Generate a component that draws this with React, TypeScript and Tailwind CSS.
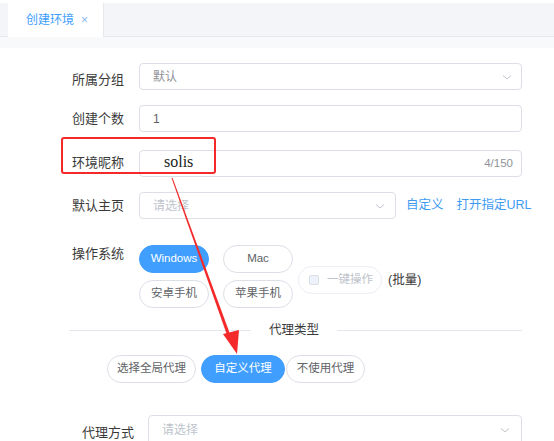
import React from 'react';

const font = { fontFamily: '"Liberation Sans", "Noto Sans CJK SC", sans-serif' };

const Chevron = () => (
  <svg width="12" height="12" viewBox="0 0 12 12" fill="none" className="shrink-0">
    <path d="M2 4.5 L6 8 L10 4.5" stroke="#c0c4cc" strokeWidth="1" />
  </svg>
);

const Label: React.FC<{ text: string; className?: string }> = ({ text, className = '' }) => (
  <span className={`text-[13px] text-[#3a3a3a] shrink-0 whitespace-nowrap ${className}`}>{text}</span>
);

const Pill: React.FC<{ text: string; active?: boolean; className?: string }> = ({ text, active, className = '' }) => (
  <span
    className={`h-[28px] rounded-full flex items-center justify-center text-[11.5px] border whitespace-nowrap ${
      active ? 'bg-[#409eff] border-[#409eff] text-white' : 'bg-white border-[#dcdfe6] text-[#606266]'
    } ${className}`}
  >
    {text}
  </span>
);

export default function App() {
  return (
    <div className="relative w-[554px] h-[441px] overflow-hidden bg-white" style={font}>
      {/* tab bar */}
      <div className="pt-[3px]">
        <div className="h-[34px] bg-[#f4f5f9] border-b border-[#e6e8ee] flex pl-[8px]">
          <div className="w-[96px] h-[34px] bg-white border-r border-[#e6e8ee] flex items-center pl-[18px] gap-[7px]">
            <span className="text-[12px] text-[#409eff]">创建环境</span>
            <span className="text-[12px] text-[#8ab8ef] leading-none">×</span>
          </div>
        </div>
        <div className="h-[11px] bg-[#f8f9fb]" />
      </div>

      {/* form */}
      <div className="pl-[72px] pr-[32px] pt-[15px]">
        <div className="flex items-center h-[27px]">
          <Label text="所属分组" className="w-[67px] mt-[6px]" />
          <div className="flex-1 h-[27px] border border-[#dcdfe6] rounded-[4px] flex items-center justify-between pl-[13px] pr-[8px]">
            <span className="text-[12px] text-[#909399]">默认</span>
            <Chevron />
          </div>
        </div>

        <div className="flex items-center h-[27px] mt-[15px]">
          <Label text="创建个数" className="w-[67px]" />
          <div className="flex-1 h-[27px] border border-[#dcdfe6] rounded-[4px] flex items-center pl-[13px]">
            <span className="text-[12px] text-[#606266]">1</span>
          </div>
        </div>

        <div className="flex items-center h-[27px] mt-[18px]">
          <Label text="环境昵称" className="w-[67px] -mt-[2px]" />
          <div className="flex-1 h-[27px] border border-[#dcdfe6] rounded-[4px] flex items-center justify-between pl-[24px] pr-[8px]">
            <span
              className="text-[16px] text-[#1a1a1a] font-medium -mt-[4px]"
              style={{ fontFamily: '"Liberation Serif", serif' }}
            >
              solis
            </span>
            <span className="text-[11.5px] text-[#909399]">4/150</span>
          </div>
        </div>

        <div className="flex items-center h-[27px] mt-[15px]">
          <Label text="默认主页" className="w-[67px]" />
          <div className="w-[257px] shrink-0 h-[27px] border border-[#dcdfe6] rounded-[4px] flex items-center justify-between pl-[13px] pr-[9px]">
            <span className="text-[12px] text-[#c0c4cc]">请选择</span>
            <Chevron />
          </div>
          <span className="ml-[10px] text-[12.5px] text-[#3d9bf3] whitespace-nowrap shrink-0">自定义</span>
          <span className="ml-[13px] text-[12.5px] text-[#3d9bf3] whitespace-nowrap shrink-0">打开指定URL</span>
        </div>

        <div className="flex mt-[26px]">
          <Label text="操作系统" className="w-[67px] mt-[-1px]" />
          <div className="grid grid-cols-[70px_70px] gap-x-[14px] gap-y-[7px]">
            <Pill text="Windows" active />
            <Pill text="Mac" />
            <Pill text="安卓手机" />
            <Pill text="苹果手机" />
          </div>
          <div className="flex items-center ml-[5px] mt-[21px] h-[28px]">
            <span className="w-[84px] h-[28px] rounded-full border border-[#ebeef5] flex items-center pl-[10px] gap-[8px]">
              <span className="w-[10px] h-[10px] rounded-[2px] border border-[#dcdfe6] bg-[#edf2fc]" />
              <span className="text-[11.5px] text-[#c0c4cc]">一键操作</span>
            </span>
            <span className="ml-[6px] text-[12.5px] text-[#3a3a3a]">(批量)</span>
          </div>
        </div>
      </div>

      {/* divider */}
      <div className="flex items-center ml-[69px] mr-[32px] mt-[15px] h-[14px]">
        <div className="flex-1 h-px bg-[#e4e7ed]" />
        <span className="px-[18px] text-[12.5px] text-[#3a3a3a]">代理类型</span>
        <div className="w-[185px] h-px bg-[#e4e7ed]" />
      </div>

      <div className="flex ml-[107px] mt-[18px] gap-[5px]">
        <Pill text="选择全局代理" className="w-[89px]" />
        <Pill text="自定义代理" active className="w-[84px]" />
        <Pill text="不使用代理" className="w-[79px] -ml-[4px]" />
      </div>

      <div className="flex items-start ml-[82px] mr-[32px] mt-[32px]">
        <Label text="代理方式" className="w-[66px] mt-[8px]" />
        <div className="flex-1 h-[30px] border border-[#dcdfe6] rounded-[4px] flex items-center justify-between pl-[13px] pr-[10px]">
          <span className="text-[12px] text-[#c0c4cc]">请选择</span>
          <Chevron />
        </div>
      </div>

      {/* annotation */}
      <div className="absolute left-[61px] top-[137px] w-[155px] h-[37px] border-2 border-[#f42a2a] rounded-[3px] pointer-events-none" />
      <svg className="absolute left-0 top-0 pointer-events-none" width="554" height="441">
        <polygon points="171.5,178 172.5,177.8 230,334 227,335" fill="#f42a2a" />
        <polygon points="237,354 223,334 239,330" fill="#f42a2a" />
      </svg>
    </div>
  );
}
